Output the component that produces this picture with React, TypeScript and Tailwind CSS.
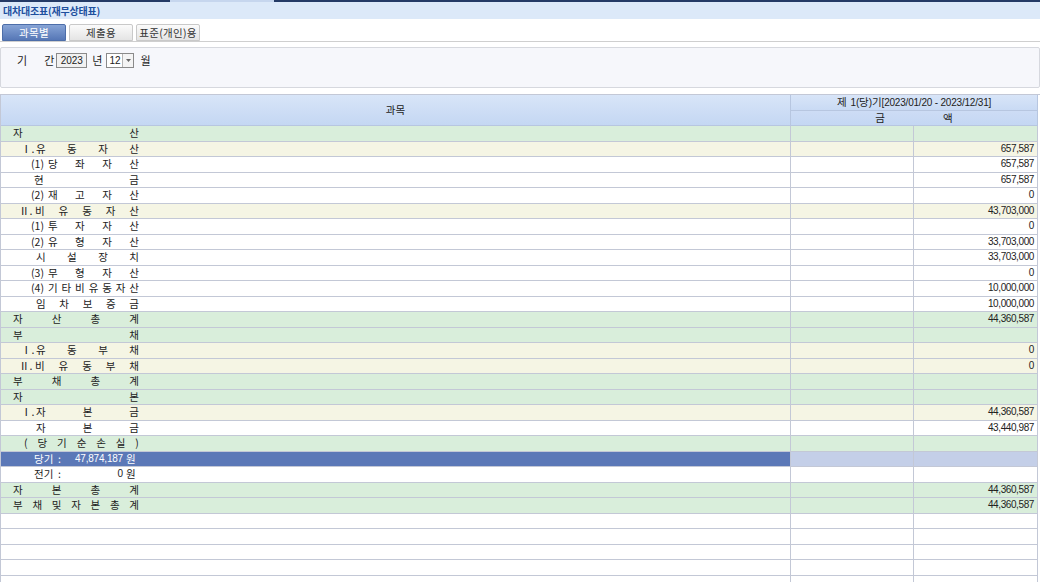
import * as React from "react";

type Row = {
  prefix?: string;
  label?: string;
  pad?: string;
  preW?: string;
  amount?: string;
  tone: "green" | "yellow" | "white" | "sel";
  custom?: React.ReactNode;
};

const font = "font-['Noto_Sans_CJK_KR','Noto_Sans',sans-serif]";
const num = "font-['Liberation_Sans',Arial,sans-serif]";

const rows: Row[] = [
  { label: "자산", pad: "pl-[12px]", tone: "green" },
  { prefix: "Ⅰ.", preW: "w-[15px]", label: "유동자산", pad: "pl-[20px]", amount: "657,587", tone: "yellow" },
  { prefix: "(1)", preW: "w-[17px]", label: "당좌자산", pad: "pl-[30px]", amount: "657,587", tone: "white" },
  { label: "현금", pad: "pl-[33px]", amount: "657,587", tone: "white" },
  { prefix: "(2)", preW: "w-[17px]", label: "재고자산", pad: "pl-[30px]", amount: "0", tone: "white" },
  { prefix: "Ⅱ.", preW: "w-[16px]", label: "비유동자산", pad: "pl-[18px]", amount: "43,703,000", tone: "yellow" },
  { prefix: "(1)", preW: "w-[17px]", label: "투자자산", pad: "pl-[30px]", amount: "0", tone: "white" },
  { prefix: "(2)", preW: "w-[17px]", label: "유형자산", pad: "pl-[30px]", amount: "33,703,000", tone: "white" },
  { label: "시설장치", pad: "pl-[35px]", amount: "33,703,000", tone: "white" },
  { prefix: "(3)", preW: "w-[17px]", label: "무형자산", pad: "pl-[30px]", amount: "0", tone: "white" },
  { prefix: "(4)", preW: "w-[17px]", label: "기타비유동자산", pad: "pl-[30px]", amount: "10,000,000", tone: "white" },
  { label: "임차보증금", pad: "pl-[35px]", amount: "10,000,000", tone: "white" },
  { label: "자산총계", pad: "pl-[12px]", amount: "44,360,587", tone: "green" },
  { label: "부채", pad: "pl-[12px]", tone: "green" },
  { prefix: "Ⅰ.", preW: "w-[15px]", label: "유동부채", pad: "pl-[20px]", amount: "0", tone: "yellow" },
  { prefix: "Ⅱ.", preW: "w-[16px]", label: "비유동부채", pad: "pl-[18px]", amount: "0", tone: "yellow" },
  { label: "부채총계", pad: "pl-[12px]", tone: "green" },
  { label: "자본", pad: "pl-[12px]", tone: "green" },
  { prefix: "Ⅰ.", preW: "w-[15px]", label: "자본금", pad: "pl-[20px]", amount: "44,360,587", tone: "yellow" },
  { label: "자본금", pad: "pl-[35px]", amount: "43,440,987", tone: "white" },
  { label: "(당기순손실)", pad: "pl-[23px]", tone: "green" },
  {
    tone: "sel",
    custom: (
      <div className="flex items-center pl-[33px] text-white">
        <span className="w-[24px]">당기</span>
        <span className="w-[15px]">:</span>
        <span className={`${num} w-[50px] text-right text-[10px] tracking-[-0.2px]`}>47,874,187</span>
        <span className="ml-[3px]">원</span>
      </div>
    ),
  },
  {
    tone: "white",
    custom: (
      <div className="flex items-center pl-[33px]">
        <span className="w-[24px]">전기</span>
        <span className="w-[15px]">:</span>
        <span className={`${num} w-[50px] text-right text-[10px]`}>0</span>
        <span className="ml-[3px]">원</span>
      </div>
    ),
  },
  { label: "자본총계", pad: "pl-[12px]", amount: "44,360,587", tone: "green" },
  { label: "부채및자본총계", pad: "pl-[12px]", amount: "44,360,587", tone: "green" },
];

const toneBg = {
  green: "bg-[#d9eedb]",
  yellow: "bg-[#f5f5e4]",
  white: "bg-white",
  sel: "bg-[#c4cfe8]",
};

const Label = ({ row }: { row: Row }) => (
  <div className={`flex w-[138px] items-center ${row.pad}`}>
    {row.prefix && <span className={`${row.preW} shrink-0 text-[10.5px]`}>{row.prefix}</span>}
    <div className="flex flex-1 justify-between">
      {row.label!.split("").map((c, i) => (
        <span key={i}>{c}</span>
      ))}
    </div>
  </div>
);

const TableRow = ({ row }: { row: Row }) => {
  const bg = toneBg[row.tone];
  return (
    <div className="flex h-[15.5px] text-[10.5px] leading-none text-[#222]">
      <div
        className={`flex w-[790px] items-center border-r border-b border-[#c3c8d6] ${
          row.tone === "sel" ? "bg-[#5b78b7]" : bg
        }`}
      >
        {row.custom ?? <Label row={row} />}
      </div>
      <div className={`w-[123px] border-r border-b border-[#c3c8d6] ${bg}`} />
      <div
        className={`flex w-[124px] items-center justify-end border-r border-b border-[#c3c8d6] pr-[3px] ${num} text-[10px] tracking-[-0.4px] ${bg}`}
      >
        {row.amount}
      </div>
    </div>
  );
};

const Tab = ({ text, active }: { text: string; active?: boolean }) => (
  <div
    className={`flex h-[17px] w-[64px] items-center justify-center rounded-t-[2px] border text-[10.5px] tracking-[0.3px] ${
      active
        ? "border-[#4d6ea9] bg-gradient-to-b from-[#87a4d6] to-[#5677b6] text-white"
        : "border-[#c9c9c9] bg-gradient-to-b from-[#fbfbfb] to-[#e4e4e4] text-[#333]"
    }`}
  >
    {text}
  </div>
);

export default function App() {
  return (
    <div className={`h-[582px] w-[1040px] overflow-hidden bg-white ${font}`}>
      {/* window strip */}
      <div className="flex h-[2px]">
        <div className="w-[170px] bg-[#243a66]" />
        <div className="w-[104px] bg-[#c6d6ee]" />
        <div className="flex-1 bg-[#243a66]" />
      </div>
      <div className="flex h-[17px] items-center bg-[#dce9f9] pl-[3px] text-[10px] font-bold tracking-[-0.2px] text-[#1d4f9e]">
        대차대조표(재무상태표)
      </div>

      {/* tabs */}
      <div className="mt-[5px] flex gap-[3px] border-b border-[#cfcfcf] pl-[2px]">
        <Tab text="과목별" active />
        <Tab text="제출용" />
        <Tab text="표준(개인)용" />
      </div>

      {/* period filter */}
      <div className="mt-[5px] h-[41px] rounded-[2px] border border-[#d6d8de] bg-[#f6f7fb] pt-[4px]">
        <div className="flex items-center text-[11px] text-[#222]">
          <span className="ml-[16px]">기</span>
          <span className="ml-[17px]">간</span>
          <div className={`ml-[2px] flex h-[15px] w-[31px] items-center justify-center border border-[#8a8a8a] bg-[#f1f1f1] ${num} text-[10px]`}>
            2023
          </div>
          <span className="ml-[5px]">년</span>
          <div className="ml-[4px] flex h-[15px] w-[28px] items-stretch border border-[#8a8a8a] bg-white">
            <span className={`flex-1 pl-[2px] ${num} text-[10px] leading-[13px]`}>12</span>
            <span className="flex w-[11px] items-center justify-center border-l border-[#b5b5b5] bg-[#f4f4f4]">
              <svg width="5" height="3" viewBox="0 0 5 3">
                <path d="M0 0h5L2.5 3z" fill="#666" />
              </svg>
            </span>
          </div>
          <span className="ml-[6px]">월</span>
        </div>
      </div>

      {/* balance sheet grid */}
      <div className="mt-[6px] border-t border-l border-[#c3c8d6]">
        <div className="flex text-[10.5px] leading-none text-[#222]">
          <div className="flex h-[31px] w-[790px] items-center justify-center border-r border-b border-[#b7c6e0] bg-gradient-to-b from-[#d8e5f8] to-[#c4d7f3]">
            과목
          </div>
          <div className="flex w-[247px] flex-col">
            <div className="flex h-[16px] items-center justify-center border-r border-b border-[#b7c6e0] bg-gradient-to-b from-[#d8e5f8] to-[#c9daf4]">
              <span>제</span>
              <span className={`${num} ml-[4px] text-[10px] tracking-[-0.2px]`}>1(</span>
              <span>당</span>
              <span className={`${num} text-[10px] tracking-[-0.2px]`}>)</span>
              <span>기</span>
              <span className={`${num} text-[10px] tracking-[-0.2px]`}>[2023/01/20 - 2023/12/31]</span>
            </div>
            <div className="flex h-[15px] items-center justify-center gap-[58px] border-r border-b border-[#b7c6e0] bg-gradient-to-b from-[#cddcf5] to-[#c4d7f3]">
              <span>금</span>
              <span>액</span>
            </div>
          </div>
        </div>
        {rows.map((r, i) => (
          <TableRow key={i} row={r} />
        ))}
        {Array.from({ length: 5 }).map((_, i) => (
          <TableRow key={`e${i}`} row={{ tone: "white", custom: <span /> }} />
        ))}
      </div>
    </div>
  );
}
